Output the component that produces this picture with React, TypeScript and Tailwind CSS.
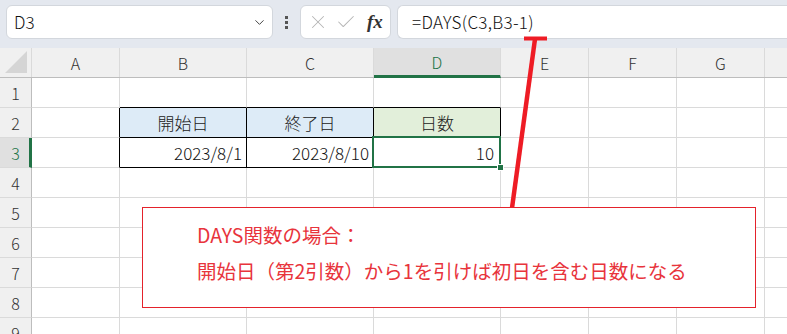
import { ChevronDown, X, Check } from "lucide-react";

const cols = [
  { key: "A", w: "w-[88px]" },
  { key: "B", w: "w-[127px]" },
  { key: "C", w: "w-[127px]" },
  { key: "D", w: "w-[127px]" },
  { key: "E", w: "w-[88px]" },
  { key: "F", w: "w-[88px]" },
  { key: "G", w: "w-[88px]" },
  { key: "H", w: "w-[88px]" },
];

const font = "font-['Noto_Sans_CJK_JP','Noto_Sans',sans-serif]";

const tableCols = ["B", "C", "D"];

type CellProps = { row: number; col: string };

function Cell({ row, col }: CellProps) {
  const w = cols.find((c) => c.key === col)!.w;
  const inTable = (row === 2 || row === 3) && tableCols.includes(col);
  // black edges for the table come from the cell itself (right/bottom) and its neighbours (left/top)
  const right = inTable || ((row === 2 || row === 3) && col === "A") ? "border-r-black" : "border-r-[#dadada]";
  const bottom = inTable || (row === 1 && tableCols.includes(col)) ? "border-b-black" : "border-b-[#dadada]";
  const base = `${w} h-[30px] shrink-0 border-r border-b ${right} ${bottom} flex items-center text-[17px] font-light text-[#111] relative`;

  if (row === 2) {
    const label: Record<string, string> = { B: "開始日", C: "終了日", D: "日数" };
    if (label[col])
      return (
        <div className={`${base} justify-center text-[#222] ${col === "D" ? "bg-[#e2efda]" : "bg-[#ddebf7]"}`}>
          {label[col]}
        </div>
      );
  }
  if (row === 3 && col === "B") return <div className={`${base} justify-end pr-[4px]`}>2023/8/1</div>;
  if (row === 3 && col === "C") return <div className={`${base} justify-end pr-[4px]`}>2023/8/10</div>;
  if (row === 3 && col === "D")
    return (
      <div className={`${base} justify-end pr-[6px] z-10`}>
        10
        <span className="absolute -left-[2px] -top-[2px] -right-[1px] -bottom-[1px] border-2 border-[#217346]" />
        <span className="absolute -right-[4px] -bottom-[4px] w-[7px] h-[7px] bg-[#217346] border border-white" />
      </div>
    );
  return <div className={base} />;
}

export default function App() {
  const rows = [1, 2, 3, 4, 5, 6, 7, 8, 9];
  return (
    <div className={`relative w-[787px] h-[334px] overflow-hidden bg-white ${font}`}>
      {/* formula bar */}
      <div className="h-[48px] bg-[#e4e8ef] flex items-start pt-[5px] pl-[6px]">
        <div className="w-[267px] h-[34px] bg-white border border-[#d3d7dd] rounded-[6px] flex items-center justify-between pl-[7px] pr-[5px]">
          <span className="text-[17px] font-light text-[#111]">D3</span>
          <ChevronDown size={15} strokeWidth={1.6} className="text-[#444]" />
        </div>
        <div className="w-[27px] h-[34px] flex flex-col items-center justify-center gap-[2px]">
          <span className="w-[3px] h-[3px] bg-[#555]" />
          <span className="w-[3px] h-[3px] bg-[#555]" />
          <span className="w-[3px] h-[3px] bg-[#555]" />
        </div>
        <div className="w-[91px] h-[34px] bg-white border border-[#d3d7dd] rounded-[6px] flex items-center pl-[6px] gap-[6px]">
          <X size={22} strokeWidth={1.1} className="text-[#b5b5b5]" />
          <Check size={22} strokeWidth={1.1} className="text-[#b5b5b5]" />
          <span className="ml-[4px] font-['Liberation_Serif',serif] italic font-bold text-[19px] text-[#333]">fx</span>
        </div>
        <div className="ml-[6px] flex-1 h-[34px] bg-white border border-[#d3d7dd] rounded-l-[6px] border-r-0 flex items-center pl-[14px]">
          <span className="text-[17px] font-light text-[#111] tracking-[0.3px]">=DAYS(C3,B3-1)</span>
        </div>
      </div>

      {/* column header */}
      <div className="flex h-[30px] bg-[#f0f0f0] border-b border-[#bdbdbd]">
        <div className="w-[32px] shrink-0 border-r border-[#dadada] relative">
          <div className="absolute right-[4px] bottom-[4px] w-0 h-0 border-l-[22px] border-l-transparent border-b-[22px] border-b-[#d5d5d5]" />
        </div>
        {cols.map((c) => (
          <div
            key={c.key}
            className={`${c.w} shrink-0 border-r border-[#dadada] flex items-center justify-center text-[16px] font-light ${
              c.key === "D" ? "bg-[#e0e0e0] text-[#217346] border-b-[3px] border-b-[#217346] -mb-px" : "text-[#333]"
            }`}
          >
            {c.key}
          </div>
        ))}
      </div>

      {/* rows */}
      {rows.map((r) => (
        <div key={r} className="flex h-[30px]">
          <div
            className={`w-[32px] shrink-0 h-[30px] border-b border-[#dadada] flex items-center justify-center text-[16px] font-light ${
              r === 3 ? "bg-[#e0e0e0] text-[#217346] border-r-[3px] border-r-[#217346]" : "bg-[#f0f0f0] text-[#333] border-r border-r-[#bdbdbd]"
            }`}
          >
            <span className={r === 3 ? "ml-[2px]" : ""}>{r}</span>
          </div>
          {cols.map((c) => (
            <Cell key={c.key} row={r} col={c.key} />
          ))}
        </div>
      ))}

      {/* callout arrow */}
      <svg className="absolute left-0 top-0 pointer-events-none z-20" width="787" height="334">
        <line x1="535" y1="39" x2="512" y2="208" stroke="#ee1c25" strokeWidth="4.5" />
        <line x1="524" y1="38.5" x2="547" y2="38.5" stroke="#ee1c25" strokeWidth="4" />
      </svg>

      {/* callout box */}
      <div className="absolute left-[142px] top-[207px] w-[614px] h-[101px] bg-white border border-[#e4222b] z-30 pl-[54px] pt-[9px] text-[#e8343c] text-[19.5px] leading-[36px]">
        <div>DAYS関数の場合：</div>
        <div>開始日（第2引数）から1を引けば初日を含む日数になる</div>
      </div>
    </div>
  );
}
